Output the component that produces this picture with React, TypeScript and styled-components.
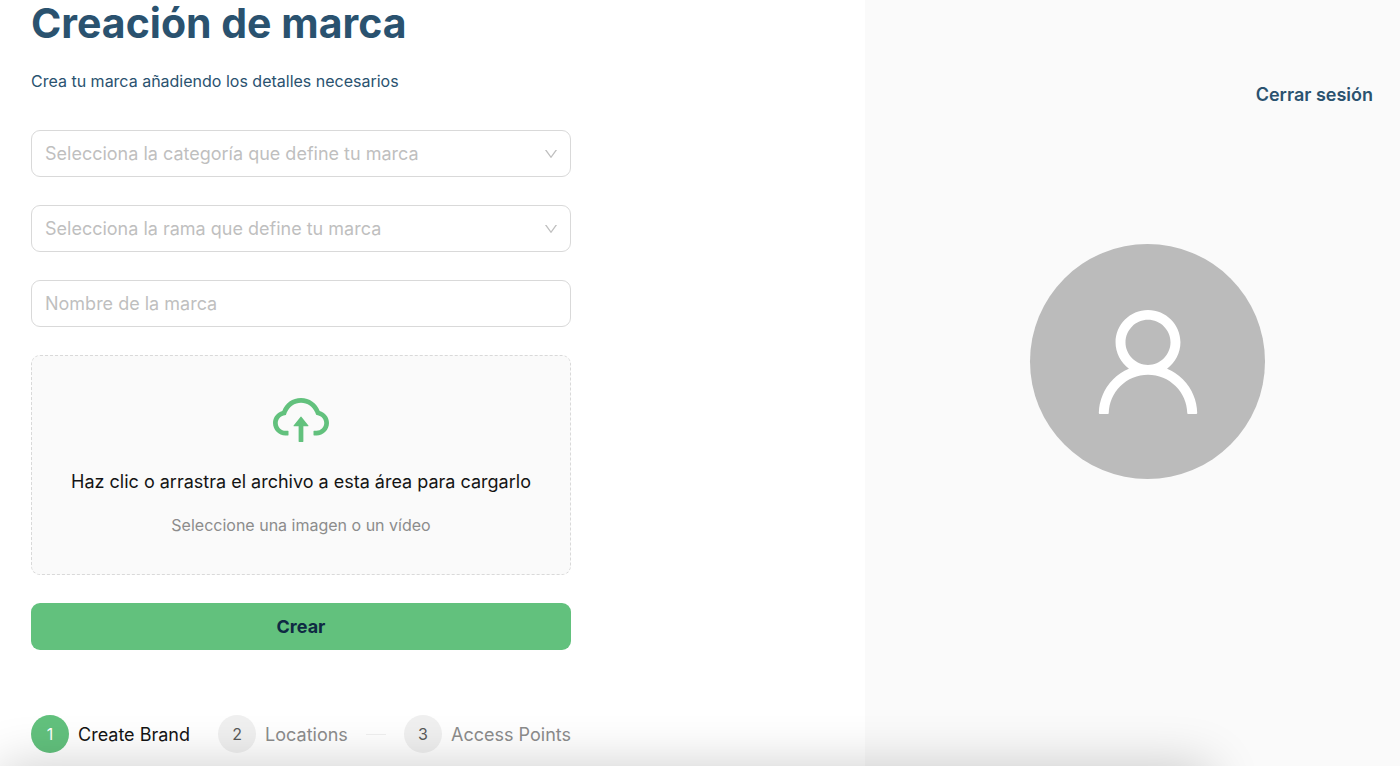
import React from "react";
import styled, { createGlobalStyle } from "styled-components";
import { AiOutlineCloudUpload, AiOutlineDown, AiOutlineUser } from "react-icons/ai";

const GlobalStyle = createGlobalStyle`
  *, *::before, *::after { box-sizing: border-box; }
  body {
    margin: 0;
    background: #fff;
    color: #141414;
    font-family: Inter, "Liberation Sans", sans-serif;
    font-size: 18px;
  }
`;

const Page = styled.div`
  display: grid;
  grid-template-columns: 865fr 535fr;
  min-height: 100vh;
`;

const Main = styled.main`
  padding: 0 31px 13px;
`;

const Content = styled.div`
  max-width: 540px;
`;

const Title = styled.h1`
  margin: 0;
  color: #2a526f;
  font-size: 41px;
  line-height: 46px;
  font-weight: 700;
`;

const Subtitle = styled.p`
  margin: 22px 0 36px;
  color: #2a526f;
  font-size: 16px;
  line-height: 26px;
`;

const Form = styled.form`
  display: flex;
  flex-direction: column;
  gap: 28px;
`;

const Field = styled.div`
  display: grid;
  align-items: center;
`;

const controlStyle = `
  grid-area: 1 / 1;
  width: 100%;
  height: 47px;
  padding: 0 13px;
  border: 1px solid #d9d9d9;
  border-radius: 9px;
  background: #fff;
  color: #bfbfbf;
  font: inherit;
  outline: none;
`;

const Select = styled.select`
  ${controlStyle}
  appearance: none;
`;

const Input = styled.input`
  ${controlStyle}
  &::placeholder { color: #bfbfbf; opacity: 1; }
`;

const Arrow = styled(AiOutlineDown)`
  grid-area: 1 / 1;
  justify-self: end;
  margin-right: 12px;
  width: 16px;
  height: 16px;
  color: #bfbfbf;
  pointer-events: none;
`;

const DropZone = styled.label`
  display: flex;
  flex-direction: column;
  align-items: center;
  height: 220px;
  padding-top: 32px;
  border: 1px dashed #d9d9d9;
  border-radius: 9px;
  background: #fafafa;
  cursor: pointer;
`;

const FileInput = styled.input`
  position: absolute;
  width: 1px;
  height: 1px;
  opacity: 0;
`;

const UploadIcon = styled(AiOutlineCloudUpload)`
  width: 64px;
  height: 64px;
  color: #62c17d;
`;

const DropTitle = styled.span`
  margin-top: 16px;
  line-height: 28px;
`;

const DropHint = styled.span`
  margin-top: 16px;
  color: #8c8c8c;
  font-size: 16px;
  line-height: 26px;
`;

const SubmitButton = styled.button`
  height: 47px;
  border: 0;
  border-radius: 9px;
  background: #62c17d;
  color: #0f2a43;
  font: inherit;
  font-weight: 700;
  cursor: pointer;
`;

const Steps = styled.ol`
  display: flex;
  align-items: center;
  justify-content: space-between;
  margin: 65px 0 0;
  padding: 0;
  list-style: none;
`;

const Step = styled.li<{ $active?: boolean }>`
  display: flex;
  align-items: center;
  gap: 9px;
  color: ${(p) => (p.$active ? "#141414" : "#8c8c8c")};
  white-space: nowrap;
`;

const StepNumber = styled.span<{ $active?: boolean }>`
  display: flex;
  align-items: center;
  justify-content: center;
  width: 38px;
  height: 38px;
  border-radius: 50%;
  background: ${(p) => (p.$active ? "#62c17d" : "#f0f0f0")};
  color: ${(p) => (p.$active ? "#fff" : "#595959")};
  font-size: 16px;
`;

const StepLine = styled.li`
  width: 20px;
  height: 1px;
  margin: 0 -10px;
  background: #f0f0f0;
`;

const Side = styled.aside`
  display: flex;
  flex-direction: column;
  padding: 81px 27px 0;
  background: #fafafa;
`;

const Logout = styled.a`
  align-self: flex-end;
  color: #2a526f;
  line-height: 28px;
  font-weight: 600;
  text-decoration: none;
`;

const Avatar = styled.div`
  display: flex;
  align-items: center;
  justify-content: center;
  align-self: center;
  width: 235px;
  height: 235px;
  margin: 135px 0 40px 30px;
  border-radius: 50%;
  background: #bbb;
  color: #fff;
`;

const UserIcon = styled(AiOutlineUser)`
  width: 134px;
  height: 134px;
`;

const BottomShade = styled.div`
  position: fixed;
  left: 0;
  right: 190px;
  top: 100%;
  height: 60px;
  box-shadow: 0 0 52px rgba(0, 0, 0, 0.2);
  pointer-events: none;
`;

export default function App() {
  return (
    <>
      <GlobalStyle />
      <Page>
        <Main>
          <Content>
            <Title>Creación de marca</Title>
            <Subtitle>Crea tu marca añadiendo los detalles necesarios</Subtitle>
            <Form onSubmit={(e) => e.preventDefault()}>
              <Field>
                <Select aria-label="Categoría" defaultValue="">
                  <option value="" disabled>Selecciona la categoría que define tu marca</option>
                </Select>
                <Arrow aria-hidden />
              </Field>
              <Field>
                <Select aria-label="Rama" defaultValue="">
                  <option value="" disabled>Selecciona la rama que define tu marca</option>
                </Select>
                <Arrow aria-hidden />
              </Field>
              <Field>
                <Input aria-label="Nombre de la marca" type="text" placeholder="Nombre de la marca" />
              </Field>
              <DropZone>
                <FileInput type="file" accept="image/*,video/*" />
                <UploadIcon aria-hidden />
                <DropTitle>Haz clic o arrastra el archivo a esta área para cargarlo</DropTitle>
                <DropHint>Seleccione una imagen o un vídeo</DropHint>
              </DropZone>
              <SubmitButton type="submit">Crear</SubmitButton>
            </Form>
            <Steps>
              <Step $active aria-current="step">
                <StepNumber $active>1</StepNumber>
                Create Brand
              </Step>
              <Step>
                <StepNumber>2</StepNumber>
                Locations
              </Step>
              <StepLine aria-hidden />
              <Step>
                <StepNumber>3</StepNumber>
                Access Points
              </Step>
            </Steps>
          </Content>
        </Main>
        <Side>
          <Logout href="#logout">Cerrar sesión</Logout>
          <Avatar>
            <UserIcon aria-hidden />
          </Avatar>
        </Side>
      </Page>
      <BottomShade />
    </>
  );
}
